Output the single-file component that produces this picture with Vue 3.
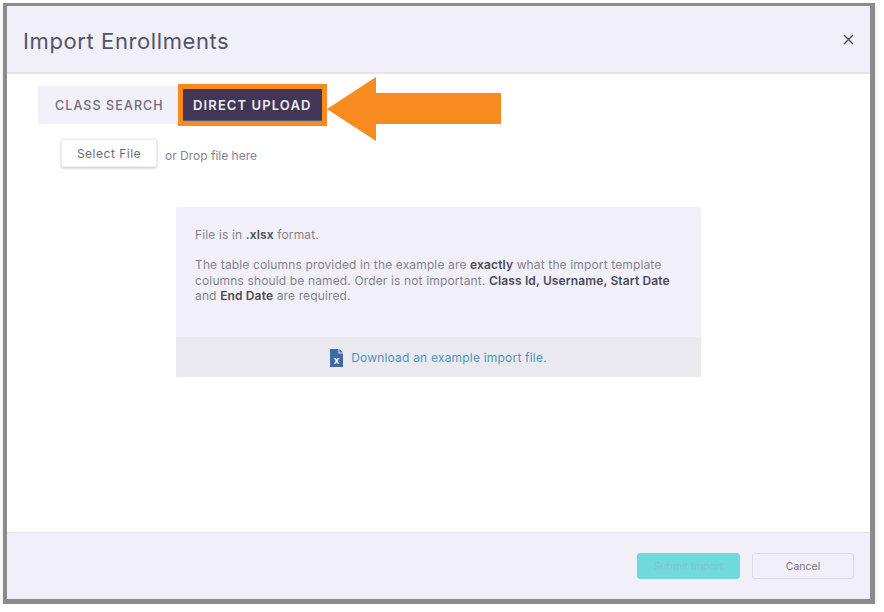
<script setup>
const notes = ['Class Id, Username, Start Date', 'End Date']
</script>

<template>
  <div class="page">
    <div class="modal">
      <header class="modal-header">
        <h1 class="modal-title">Import Enrollments</h1>
        <button class="close-btn" aria-label="Close">
          <svg width="11" height="11" viewBox="0 0 11 11">
            <path d="M1 1l9 9M10 1l-9 9" stroke="#4a4a55" stroke-width="1.4" fill="none" />
          </svg>
        </button>
      </header>

      <main class="modal-main">
        <div class="tabs">
          <div class="tab">CLASS SEARCH</div>
          <div class="tab-highlight">
            <div class="tab active">DIRECT UPLOAD</div>
          </div>
          <svg class="arrow" width="175" height="64" viewBox="0 0 175 64">
            <path d="M0 32L49 0V16H174V47H49V64Z" fill="#f78b1f" />
          </svg>
        </div>

        <div class="file-row">
          <button class="select-btn">Select File</button>
          <span class="drop-text">or Drop file here</span>
        </div>

        <section class="info">
          <div class="info-body">
            <p>File is in <b>.xlsx</b> format.</p>
            <p>
              The table columns provided in the example are <b>exactly</b> what the import template
              columns should be named. Order is not important. <b>{{ notes[0] }}</b>
              and <b>{{ notes[1] }}</b> are required.
            </p>
          </div>
          <div class="info-foot">
            <svg width="13" height="18" viewBox="0 0 13 18">
              <path d="M0 0H8.5V4.5H13V18H0Z" fill="#3f69a8" />
              <path d="M9.5 0L13 3.5H9.5Z" fill="#3f69a8" />
              <text x="6.5" y="15" text-anchor="middle" class="xls-mark">x</text>
            </svg>
            <a class="example-link">Download an example import file.</a>
          </div>
        </section>
      </main>

      <footer class="modal-footer">
        <button class="btn submit">Submit Import</button>
        <button class="btn cancel">Cancel</button>
      </footer>
    </div>
  </div>
</template>

<style>
html, body {
  margin: 0;
  background: #fff;
}
</style>

<style scoped>
.page {
  box-sizing: border-box;
  width: 872px;
  height: 601px;
  margin: 3px 0 0 3px;
  border: solid #8b8b8b;
  border-width: 3px 5px 5px 4px;
  box-shadow: 0 3px 6px rgba(90, 90, 130, 0.18);
  font-family: "Inter", "Liberation Sans", sans-serif;
}
.modal {
  height: 100%;
  display: flex;
  flex-direction: column;
  background: #fff;
}
.modal-header {
  height: 66px;
  flex: none;
  display: flex;
  align-items: center;
  justify-content: space-between;
  padding: 0 16px;
  background: #f1f0f8;
  border-bottom: 2px solid #e3e2ee;
}
.modal-title {
  margin: 4px 0 0;
  font-size: 22px;
  font-weight: 400;
  letter-spacing: 0.6px;
  color: #55526b;
}
.close-btn {
  display: flex;
  padding: 0;
  border: none;
  background: none;
}
.modal-main {
  flex: 1;
  padding: 12px 0 0 31px;
}
.tabs {
  position: relative;
  display: flex;
  align-items: center;
  height: 38px;
}
.tab {
  box-sizing: border-box;
  height: 38px;
  padding: 0 17px;
  display: flex;
  align-items: center;
  background: #f1f0f8;
  color: #6d6b7c;
  font-size: 12.5px;
  font-weight: 500;
  letter-spacing: 1.1px;
}
.tab-highlight {
  box-sizing: border-box;
  height: 42px;
  margin-left: -3px;
  border: 5px solid #f78b1f;
}
.tab.active {
  width: 139px;
  height: 32px;
  padding: 0;
  justify-content: center;
  background: #413655;
  border-bottom: 1px solid #4b5a90;
  color: #ecebf3;
  font-size: 13px;
  font-weight: 600;
  letter-spacing: 1.1px;
}
.arrow {
  position: absolute;
  left: 289px;
  top: -9px;
}
.file-row {
  display: flex;
  align-items: center;
  gap: 8px;
  margin: 15px 0 0 23px;
}
.select-btn {
  width: 96px;
  height: 28px;
  padding: 0;
  border: 1px solid #ebebf0;
  border-radius: 2px;
  background: #fff;
  box-shadow: 0 1px 3px rgba(60, 60, 80, 0.3);
  color: #6c6a78;
  font-family: inherit;
  font-size: 12px;
  letter-spacing: 0.5px;
}
.drop-text {
  margin-top: 5px;
  color: #85838f;
  font-size: 12px;
}
.info {
  width: 525px;
  margin: 40px 0 0 138px;
  border-radius: 2px;
  overflow: hidden;
  background: #f1f0f8;
  color: #85838f;
  font-size: 12px;
  letter-spacing: 0.14px;
  line-height: 15.5px;
}
.info-body {
  height: 130px;
  box-sizing: border-box;
  padding: 20px 26px 0 19px;
}
.info-body p {
  margin: 0 0 14.5px;
}
.info-body b {
  font-weight: 600;
  color: #4c4a58;
}
.info-foot {
  height: 40px;
  box-sizing: border-box;
  padding-top: 2px;
  display: flex;
  align-items: center;
  justify-content: center;
  gap: 8px;
  background: #eae9f0;
}
.xls-mark {
  font-family: "Liberation Sans", sans-serif;
  font-size: 10px;
  font-weight: 700;
  fill: #fff;
}
.example-link {
  color: #4c97bd;
  font-size: 12px;
  letter-spacing: 0.2px;
}
.modal-footer {
  height: 67px;
  flex: none;
  box-sizing: border-box;
  display: flex;
  align-items: center;
  justify-content: flex-end;
  gap: 12px;
  padding: 0 16px 0 0;
  background: #f1f0f8;
  border-top: 1px solid #e3e2ee;
}
.btn {
  height: 26px;
  padding: 0;
  border-radius: 3px;
  font-family: inherit;
  font-size: 10.5px;
}
.submit {
  width: 103px;
  border: 1px solid #72d9dc;
  background: #70d9dc;
  color: #7fc6d2;
}
.cancel {
  width: 102px;
  border: 1px solid #dddbe8;
  background: #f1f0f8;
  color: #77757f;
}
</style>
